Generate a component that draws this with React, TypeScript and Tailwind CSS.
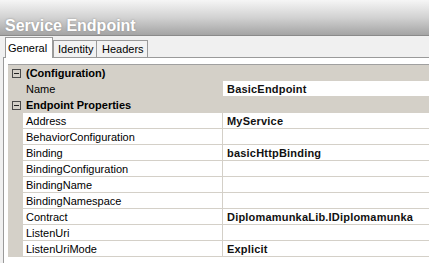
import React from "react";

type Row =
  | { kind: "cat"; label: string }
  | { kind: "prop"; label: string; value?: string; selected?: boolean };

const rows: Row[] = [
  { kind: "cat", label: "(Configuration)" },
  { kind: "prop", label: "Name", value: "BasicEndpoint", selected: true },
  { kind: "cat", label: "Endpoint Properties" },
  { kind: "prop", label: "Address", value: "MyService" },
  { kind: "prop", label: "BehaviorConfiguration" },
  { kind: "prop", label: "Binding", value: "basicHttpBinding" },
  { kind: "prop", label: "BindingConfiguration" },
  { kind: "prop", label: "BindingName" },
  { kind: "prop", label: "BindingNamespace" },
  { kind: "prop", label: "Contract", value: "DiplomamunkaLib.IDiplomamunka" },
  { kind: "prop", label: "ListenUri" },
  { kind: "prop", label: "ListenUriMode", value: "Explicit" },
];

function MinusBox() {
  return (
    <div className="flex h-[9px] w-[9px] items-center justify-center border border-[#4a4a4a]">
      <div className="h-px w-[5px] bg-[#222]" />
    </div>
  );
}

export default function App() {
  return (
    <div className="h-[263px] w-[429px] overflow-hidden bg-[#f0f0f0] font-['Liberation_Sans',Arial,sans-serif] text-black">
      {/* title bar */}
      <div className="h-[36px] border-b border-[#8a8a8a] bg-gradient-to-b from-[#f6f6f6] via-[#d2d2d2] to-[#a4a4a4] pl-[5px] pt-[14px]">
        <span className="text-[16px] font-bold leading-[16px] text-white [text-shadow:0_0_2px_#8c8c8c]">
          Service Endpoint
        </span>
      </div>

      {/* tabs */}
      <div className="flex h-[21px] items-end pl-[5px] text-[11px] leading-[13px]">
        <div className="relative z-10 -mb-px h-[21px] w-[48px] border border-b-0 border-[#9a9a9a] bg-white pl-[2px] pt-[4px]">
          General
        </div>
        <div className="h-[17px] w-[44px] border border-b-0 border-[#9a9a9a] bg-[#f2f2f2] pl-[4px] pt-[2px]">
          Identity
        </div>
        <div className="h-[17px] w-[51px] border border-b-0 border-l-0 border-[#9a9a9a] bg-[#f2f2f2] pl-[5px] pt-[2px]">
          Headers
        </div>
      </div>

      {/* tab page */}
      <div className="ml-[3px] h-full border-l border-t border-[#9a9a9a] bg-white pl-[4px] pt-[6px]">
        <div className="border-t border-[#a0a0a0] text-[11px] leading-[13px]">
          {rows.map((r, i) =>
            r.kind === "cat" ? (
              <div
                key={i}
                className="flex h-[16px] items-start border-b border-[#d4d0c8] bg-[#d4d0c8]"
              >
                <div className="flex w-[15px] justify-center pt-[4px] pl-[1px]">
                  <MinusBox />
                </div>
                <div className="pl-[3px] pt-[2px] font-bold">{r.label}</div>
              </div>
            ) : (
              <div key={i} className="flex h-[16px]">
                <div className="w-[15px] bg-[#d4d0c8]" />
                <div
                  className={
                    "w-[200px] border-b border-r border-[#d4d0c8] pl-[3px] pt-[2px] " +
                    (r.selected ? "bg-[#d4d0c8]" : "bg-white")
                  }
                >
                  {r.label}
                </div>
                <div className="flex-1 border-b border-[#d4d0c8] bg-white pl-[4px] pt-[2px] font-bold tracking-[0.2px] text-[#111]">
                  {r.value}
                </div>
              </div>
            )
          )}
        </div>
      </div>
    </div>
  );
}
